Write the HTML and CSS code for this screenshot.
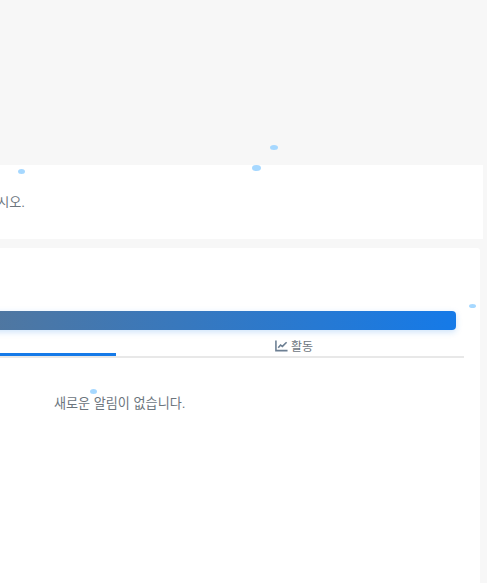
FILE: index.html
```html
<!DOCTYPE html>
<html lang="ko">
<head>
<meta charset="utf-8">
<title>알림</title>
<link rel="stylesheet" href="styles.css">
</head>
<body>
<main class="page">
  <section class="card card-notice">
    <p class="notice">로그인하십시오.</p>
  </section>
  <section class="card card-main">
    <button class="action" type="button"></button>
    <nav class="tabs">
      <a class="tab tab-active"></a>
      <a class="tab">
        <svg class="tab-icon" viewBox="0 0 14 14" aria-hidden="true"><path d="M1 1.500V12.500H13.500"/><path d="M3.500 9.500L6 6.500L8 8L12.500 3.500"/></svg>
        <span class="tab-label">활동</span>
      </a>
    </nav>
    <p class="empty">새로운 알림이 없습니다.</p>
  </section>
</main>
<span class="dot dot-a"></span>
<span class="dot dot-b"></span>
<span class="dot dot-c"></span>
<span class="dot dot-d"></span>
<span class="dot dot-e"></span>
</body>
</html>
```
FILE: styles.css
```css
* { box-sizing: border-box; }
html, body { height: 100%; }
body {
  margin: 0;
  overflow: hidden;
  background: #f7f7f7;
  color: #6c757d;
  font-family: "Liberation Sans", "Noto Sans CJK KR", sans-serif;
  font-size: 13.1px;
}
.page {
  display: flex;
  flex-direction: column;
  gap: 9px;
  height: 100%;
  padding-top: 165px;
  margin-left: -232px;
}
.card { background: #fff; }
.card-notice {
  height: 74px;
  margin-right: 4px;
  padding-top: 28.500px;
}
.notice {
  margin: 0;
  text-align: right;
  width: 257px;
  line-height: 18px;
}
.card-main {
  flex: 1;
  margin-right: 7px;
  border-radius: 3px 3px 0 0;
  padding-top: 63px;
}
.action {
  display: block;
  width: 688px;
  height: 19px;
  border: 0;
  padding: 0;
  border-radius: 4px;
  background: linear-gradient(90deg, #6c757d, #157ae8);
  box-shadow: 0 2px 6px rgba(21, 122, 232, .22);
}
.tabs {
  display: grid;
  grid-template-columns: 348px 348px;
  width: 696px;
  margin-top: 7px;
  height: 21px;
  border-bottom: 2px solid #e8e8e8;
}
.tab {
  display: flex;
  align-items: center;
  justify-content: center;
  gap: 3px;
  height: 17px;
  padding-left: 8px;
  font-size: 12px;
}
.tab-active {
  height: 19px;
  border-bottom: 3px solid #157ae8;
}
.tab-icon {
  width: 13px;
  height: 13px;
  fill: none;
  stroke: #6c7f93;
  stroke-width: 1.700;
}
.empty {
  margin: 37px 0 0 286px;
  line-height: 18px;
}
.dot {
  position: absolute;
  border-radius: 50%;
  background: #a6d8ff;
}
.dot-a { left: 18px; top: 169px; width: 7px; height: 5px; }
.dot-b { left: 252px; top: 165px; width: 9px; height: 6px; }
.dot-c { left: 270px; top: 144.500px; width: 8px; height: 5px; }
.dot-d { left: 469px; top: 304px; width: 7px; height: 4px; }
.dot-e { left: 90px; top: 389px; width: 7px; height: 5px; }
```
